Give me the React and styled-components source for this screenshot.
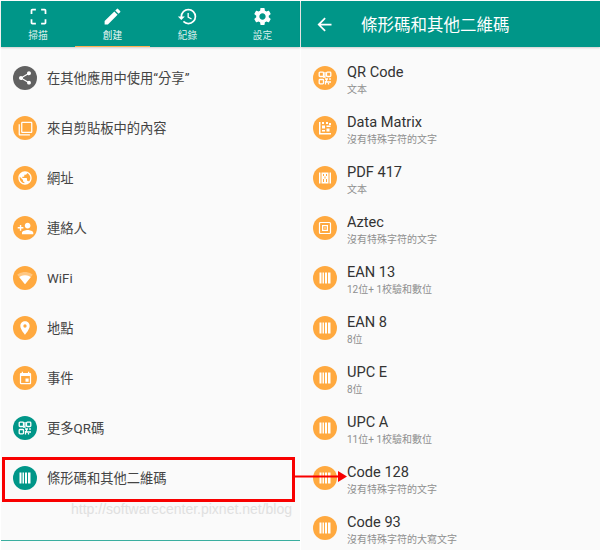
import React from 'react';
import styled, { createGlobalStyle } from 'styled-components';
import { MdCropFree, MdCreate, MdHistory, MdSettings, MdShare, MdFilterNone, MdPublic, MdPersonAdd, MdPlace, MdEvent, MdArrowBack } from 'react-icons/md';

const Global = createGlobalStyle`
  html, body { margin: 0; padding: 0; background: #fff; }
  * { box-sizing: border-box; }
`;
const TEAL = '#009688';
const ORANGE = '#ffa93f';
const FONT = `Roboto, "Noto Sans CJK TC", sans-serif`;

const Page = styled.div`
  position: relative; width: 600px; height: 550px; overflow: hidden;
  display: flex; gap: 1px; padding: 1px 0 0 1px; background: #fff; font-family: ${FONT};
`;
const Panel = styled.section`
  width: ${p => p.$w}px; flex: none; display: flex; flex-direction: column; background: #fafafa;
`;
const TabBar = styled.nav`
  height: 46px; flex: none; background: ${TEAL}; display: grid; grid-template-columns: 74px repeat(3, 75px);
  box-shadow: 0 1px 2px rgba(0,0,0,.18);
`;
const Tab = styled.div`
  display: flex; flex-direction: column; align-items: center; padding-top: 5px;
  color: rgba(255,255,255,${p => p.$active ? .95 : .86});
  border-bottom: 1.5px solid ${p => p.$active ? '#ffb04f' : 'transparent'};
  font-size: 9.7px; line-height: 13px;
  svg { font-size: 21px; display: block; margin-bottom: 2px; color: #fff; }
`;
const Menu = styled.div`flex: 1; padding-top: 6px;`;
const Row = styled.div`
  height: 50px; display: flex; align-items: center; gap: 10px; padding-left: 12px;
`;
const Circle = styled.span`
  width: 24px; height: 24px; flex: none; border-radius: 50%; background: ${p => p.$bg || ORANGE};
  color: #fff; display: flex; align-items: center; justify-content: center;
`;
const Label = styled.span`font-size: 13.3px; color: #444; line-height: 20px; padding-top: 1px;`;
const Foot = styled.div`height: 10px; flex: none; border-top: 1px solid #39ae9f; background: #fafafa;`;
const TitleBar = styled.header`
  height: 46px; flex: none; background: ${TEAL}; color: #fff; display: flex; align-items: center;
  padding-left: 13px; gap: 26px; font-size: 16.5px; box-shadow: 0 1px 2px rgba(0,0,0,.18);
  svg { font-size: 21px; flex: none; }
`;
const List = styled.div`padding-top: 6px;`;
const TextBlock = styled.div`display: flex; flex-direction: column; padding-top: 3px;`;
const Title = styled.span`font-size: 14.6px; line-height: 19px; color: #333;`;
const Sub = styled.span`font-size: 10px; line-height: 14px; margin-top: 1px; color: #8f8f8f;`;
const Highlight = styled.div`
  position: absolute; left: 2px; top: 457px; width: 293px; height: 45px; border: 3px solid #f80000;
`;
const Arrow = styled.svg`position: absolute; left: 294px; top: 467px;`;
const Mark = styled.div`
  position: absolute; left: 71px; top: 501px; font: 14px/16px "Liberation Sans", sans-serif;
  color: #e0e0e0; white-space: nowrap;
`;

const Bars = () => (
  <svg width="14" height="14" viewBox="0 0 14 14" fill="#fff">
    <rect x="1.500" y="1.500" width="2" height="11" /><rect x="4.500" y="1.500" width="1.500" height="11" />
    <rect x="7" y="1.500" width="2" height="11" /><rect x="10" y="1.500" width="2.500" height="11" />
  </svg>
);
const Qr = () => (
  <svg width="14" height="14" viewBox="0 0 14 14" fill="none" stroke="#fff" strokeWidth="1.3">
    <rect x="1.200" y="1.200" width="4.300" height="4.300" rx=".8" /><rect x="8.500" y="1.200" width="4.300" height="4.300" rx=".8" />
    <rect x="1.200" y="8.500" width="4.300" height="4.300" rx=".8" />
    <path d="M7 1v5H5M7 8h3M8.500 8.500v2.500H13M12 7v2M7.500 10v3.500M10.500 12v1.500" />
  </svg>
);
const Matrix = () => (
  <svg width="14" height="14" viewBox="0 0 14 14" fill="#fff">
    <path d="M1 1h1.500v11H13v1.500H1zM4 1h2v2H4zM8 1h2v2H8zM11 2h2v2h-2zM4 4.500h3v3H4zM8.500 4.500h4v1.500h-4zM8.500 7.500h3v3h-3zM4 9h3v1.500H4z" />
  </svg>
);
const Pdf = () => (
  <svg width="14" height="14" viewBox="0 0 14 14" fill="#fff">
    <rect x="1" y="1.500" width="1.500" height="11" /><rect x="11.500" y="1.500" width="1.500" height="11" />
    <rect x="3.500" y="1.500" width="7" height="11" />
    <path fill={ORANGE} d="M5 3h1v2H5zM8 3h1v2H8zM6.500 5.500h1v2h-1zM5 8h1v3H5zM8 8h1v3H8z" />
  </svg>
);
const Aztec = () => (
  <svg width="14" height="14" viewBox="0 0 14 14" fill="none" stroke="#fff" strokeWidth="1.2">
    <rect x="1.500" y="1.500" width="11" height="11" rx="1" /><rect x="4.600" y="4.600" width="4.800" height="4.800" /><rect x="6.400" y="6.400" width="1.200" height="1.200" fill="#fff" stroke="none" />
  </svg>
);
const Wifi = () => (
  <svg width="16" height="16" viewBox="0 0 24 24" fill="#fff">
    <path fillOpacity=".35" d="M12 21.500 23.600 7C23.100 6.600 18.600 3 12 3S.9 6.600.4 7L12 21.500z" />
    <path d="M3.500 10.800 12 21.500l8.500-10.700C20 10.400 16.800 8 12 8s-8 2.400-8.500 2.800z" />
  </svg>
);

const menu = [
  [<MdShare size={16} />, '在其他應用中使用“分享”', '#616161'],
  [<MdFilterNone size={15} />, '來自剪貼板中的內容'],
  [<MdPublic size={16} />, '網址'],
  [<MdPersonAdd size={17} />, '連絡人'],
  [<Wifi />, 'WiFi'],
  [<MdPlace size={16} />, '地點'],
  [<MdEvent size={15} />, '事件'],
  [<Qr />, '更多QR碼', TEAL],
  [<Bars />, '條形碼和其他二維碼', TEAL],
];
const codes = [
  [<Qr />, 'QR Code', '文本'],
  [<Matrix />, 'Data Matrix', '沒有特殊字符的文字'],
  [<Pdf />, 'PDF 417', '文本'],
  [<Aztec />, 'Aztec', '沒有特殊字符的文字'],
  [<Bars />, 'EAN 13', '12位+ 1校驗和數位'],
  [<Bars />, 'EAN 8', '8位'],
  [<Bars />, 'UPC E', '8位'],
  [<Bars />, 'UPC A', '11位+ 1校驗和數位'],
  [<Bars />, 'Code 128', '沒有特殊字符的文字'],
  [<Bars />, 'Code 93', '沒有特殊字符的大寫文字'],
];
const tabs = [
  [<MdCropFree />, '掃描'], [<MdCreate />, '創建', true], [<MdHistory />, '紀錄'], [<MdSettings />, '設定'],
];

export default function App() {
  return (
    <Page>
      <Global />
      <Panel $w={299}>
        <TabBar>
          {tabs.map(([icon, text, active]) => <Tab key={text} $active={active}>{icon}{text}</Tab>)}
        </TabBar>
        <Menu>
          {menu.map(([icon, text, bg]) => (
            <Row key={text}><Circle $bg={bg}>{icon}</Circle><Label>{text}</Label></Row>
          ))}
        </Menu>
        <Foot />
      </Panel>
      <Panel $w={299}>
        <TitleBar><MdArrowBack />條形碼和其他二維碼</TitleBar>
        <List>
          {codes.map(([icon, t, s]) => (
            <Row key={t}>
              <Circle>{icon}</Circle>
              <TextBlock><Title>{t}</Title><Sub>{s}</Sub></TextBlock>
            </Row>
          ))}
        </List>
      </Panel>
      <Mark>http://softwarecenter.pixnet.net/blog</Mark>
      <Highlight />
      <Arrow width="54" height="20" viewBox="0 0 54 20">
        <rect x="0" y="8.500" width="44" height="2" fill="#f80000" />
        <path d="M44 4l9 5.500-9 5.500z" fill="#f80000" />
      </Arrow>
    </Page>
  );
}
